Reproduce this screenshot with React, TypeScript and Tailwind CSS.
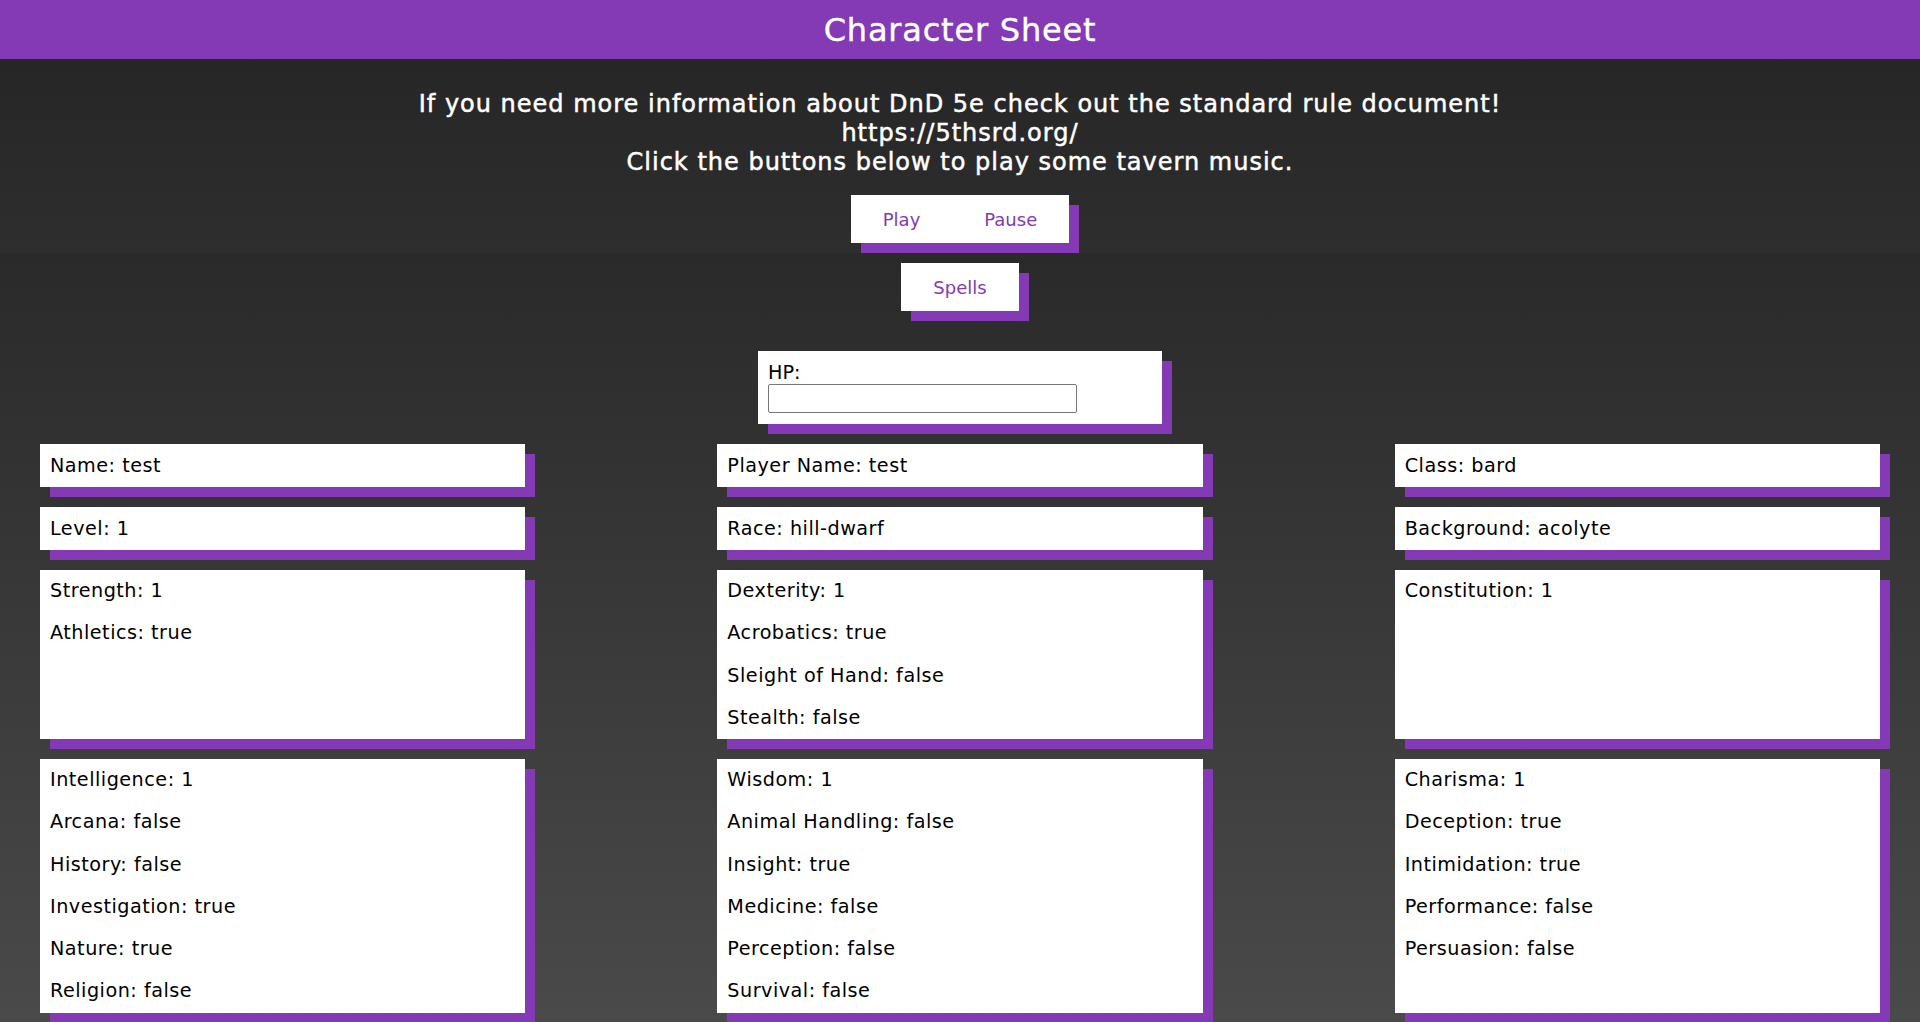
import { useState } from "react";

const rows: string[][][] = [
  [["Name: test"], ["Player Name: test"], ["Class: bard"]],
  [["Level: 1"], ["Race: hill-dwarf"], ["Background: acolyte"]],
  [
    ["Strength: 1", "Athletics: true"],
    ["Dexterity: 1", "Acrobatics: true", "Sleight of Hand: false", "Stealth: false"],
    ["Constitution: 1"],
  ],
  [
    ["Intelligence: 1", "Arcana: false", "History: false", "Investigation: true", "Nature: true", "Religion: false"],
    ["Wisdom: 1", "Animal Handling: false", "Insight: true", "Medicine: false", "Perception: false", "Survival: false"],
    ["Charisma: 1", "Deception: true", "Intimidation: true", "Performance: false", "Persuasion: false"],
  ],
];

const card = "bg-white shadow-[10px_10px_0_0_#833ab4]";

export default function App() {
  const [hp, setHp] = useState("");
  const [playing, setPlaying] = useState(false);

  return (
    <div className="min-h-screen font-['DejaVu_Sans',sans-serif] text-black">
      <header className="flex h-[59px] items-center justify-center bg-[#833ab4]">
        <h1 className="text-[32px] leading-none tracking-[0.8px] text-white [-webkit-text-stroke:0.4px_white]">
          Character Sheet
        </h1>
      </header>

      <section className="flex flex-col items-center bg-gradient-to-b from-[#262626] to-[#2e2e2e] pb-[10px] pt-[31px]">
        <div className="text-center text-[24px] leading-[29px] tracking-[1px] text-white [-webkit-text-stroke:0.5px_white]">
          <p>If you need more information about DnD 5e check out the standard rule document!</p>
          <p>https://5thsrd.org/</p>
          <p>Click the buttons below to play some tavern music.</p>
        </div>
        <div className={`mt-[18px] flex h-[48px] ${card}`}>
          <button
            onClick={() => setPlaying(true)}
            className="h-full px-[32px] text-[18px] text-[#833ab4]"
          >
            Play
          </button>
          <button
            onClick={() => setPlaying(false)}
            className="h-full px-[32px] text-[18px] text-[#833ab4]"
          >
            Pause
          </button>
        </div>
      </section>

      <section className="flex flex-col items-center bg-gradient-to-b from-[#2a2a2a] to-[#4a4a4a] pb-[10px] pt-[10px]">
        <button className={`h-[48px] px-[32px] text-[18px] text-[#833ab4] ${card}`} data-playing={playing}>
          Spells
        </button>

        <div className={`mt-[40px] w-[404px] px-[10px] pb-[11px] pt-[10px] ${card}`}>
          <label className="block text-[19.2px] leading-[23px]">HP:</label>
          <input
            value={hp}
            onChange={(e) => setHp(e.target.value)}
            className="block h-[29px] w-[309px] rounded-[2px] border border-[#767676] bg-white px-1 text-[16px] outline-none"
          />
        </div>

        <div className="mt-[20px] grid w-full grid-cols-3 gap-x-[192px] gap-y-[20px] px-[40px]">
          {rows.flatMap((row, r) =>
            row.map((lines, c) => (
              <div key={`${r}-${c}`} className={card}>
                {lines.map((line) => (
                  <p
                    key={line}
                    className={`px-[10px] py-[10px] text-[19.2px] tracking-[0.5px] ${r < 2 ? "leading-[23px]" : "leading-[22.25px]"}`}
                  >
                    {line}
                  </p>
                ))}
              </div>
            ))
          )}
        </div>
      </section>
    </div>
  );
}
